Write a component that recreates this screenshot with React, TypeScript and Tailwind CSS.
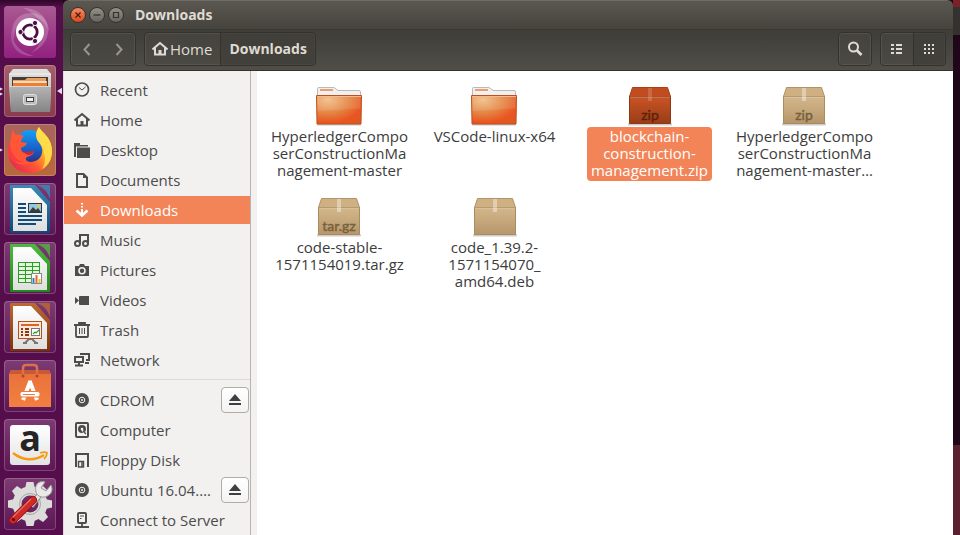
import React from "react";

const FONT = "font-['Open_Sans','Noto_Sans',sans-serif]";

/* ---------- launcher artwork ---------- */

function DashArt() {
  return (
    <svg viewBox="0 0 52 52" className="size-full" aria-hidden="true">
      <defs>
        <linearGradient id="dash" x1="0" y1="0" x2="0" y2="1">
          <stop offset="0" stopColor="#a95a92" />
          <stop offset="1" stopColor="#92207f" />
        </linearGradient>
      </defs>
      <rect width="52" height="52" rx="4" fill="url(#dash)" />
      <path d="M10 34C4 18 14 7 27 7c11 0 18 8 18 19C41 15 34 10 25 12c-9 1-15 9-15 22Z" fill="#fff" opacity=".2" />
      <path d="M19 2c15 0 25 9 25 23 0 9-6 17-17 22 10-8 15-18 11-27C35 12 28 6 19 2Z" fill="#fff" opacity=".2" />
      <path d="M8 22C7 38 16 46 30 50 14 51 4 40 8 22Z" fill="#fff" opacity=".18" />
      <circle cx="26" cy="26" r="14" fill="#fff" />
      <circle cx="26" cy="26" r="7.200" fill="none" stroke="#4c0f44" strokeWidth="2.800" />
      <path d="M26 26H16M26 26l5-9M26 26l5 9" stroke="#fff" strokeWidth="1.200" />
      <circle cx="26" cy="26" r="5" fill="#fff" />
      {[[16.5, 26], [31, 17], [31, 35]].map(([x, y]) => (
        <circle key={y} cx={x} cy={y} r="2.600" fill="#4c0f44" stroke="#fff" strokeWidth="0.900" />
      ))}
    </svg>
  );
}

function FilesArt() {
  return (
    <svg viewBox="0 0 52 52" className="size-full" aria-hidden="true">
      <defs>
        <linearGradient id="cabTop" x1="0" y1="0" x2="0" y2="1">
          <stop offset="0" stopColor="#e2e2e2" />
          <stop offset="1" stopColor="#a8a8a8" />
        </linearGradient>
        <linearGradient id="cab" x1="0" y1="0" x2="0" y2="1">
          <stop offset="0" stopColor="#b4b4b4" />
          <stop offset="1" stopColor="#858585" />
        </linearGradient>
      </defs>
      <path d="M9 4h34l4 5v12l-1 26H7L5 21V9Z" fill="url(#cabTop)" />
      <path d="M5 9h42" stroke="#f3f3f3" />
      <rect x="8" y="12" width="36" height="11" fill="#4a3c34" />
      <path d="M9 15h12l2-2h19v10H9Z" fill="#e8a15c" />
      <path d="M9 17h34" stroke="#fff1df" strokeWidth="1.400" />
      <path d="M9 19.500h34" stroke="#ef7d34" strokeWidth="3" />
      <path d="M6 21h41l-1 26H7Z" fill="url(#cab)" />
      <path d="M6 21.500h41" stroke="#d8d8d8" />
      <rect x="19.500" y="29.500" width="13" height="10" rx="2" fill="#bdbdbd" stroke="#e0e0e0" />
      <rect x="22.500" y="32.500" width="7" height="4" fill="#efefef" stroke="#444" />
    </svg>
  );
}

function FirefoxArt() {
  return (
    <svg viewBox="0 0 52 52" className="size-full" aria-hidden="true">
      <defs>
        <linearGradient id="ffBody" x1="1" y1="0.100" x2="0.150" y2="0.900">
          <stop offset="0" stopColor="#ffe34a" />
          <stop offset=".4" stopColor="#ffb02a" />
          <stop offset=".66" stopColor="#ff5a30" />
          <stop offset="1" stopColor="#ea2a50" />
        </linearGradient>
        <linearGradient id="ffGlobe" x1="0" y1="0" x2="0" y2="1">
          <stop offset="0" stopColor="#12a0f4" />
          <stop offset=".6" stopColor="#1a5fc8" />
          <stop offset="1" stopColor="#27328c" />
        </linearGradient>
      </defs>
      <circle cx="26" cy="22" r="16" fill="url(#ffGlobe)" />
      <path d="M35 3c2 5 13 10 13 24 0 13-9 22-22 22S4 40 4 27c0-4 1-8 2-11l10 14c2 5 6 8 11 8 6 0 10-4 11-9 1-5-1-8-4-12-3-5-2-10 1-14Z" fill="url(#ffBody)" />
      <path d="M35 3c2 5 13 10 13 24 0 8-4 15-10 18 3-5 4-10 2-15 0-5-2-8-6-13-3-5-2-10 1-14Z" fill="#ffe24c" opacity=".8" />
      <path d="M10 4c-1 3 0 5 2 7 3-1 6 0 8 1-2 2-3 4-3 6l6 1c0 2-4 4-6 5 0 3 2 5 5 5s5-2 8-1c-1 3-4 4-7 5-3 2 0 5 5 6-8 4-19 1-24-9 0-6 1-11 3-14 0-5 1-9 3-12Z" fill="#ff5636" />
      <path d="M6 16c-1 10 4 20 14 22-8 1-14-2-16-9 0-5 1-10 2-13Z" fill="#f8304a" opacity=".7" />
      <path d="M19 27c4 2 8-1 11 1-2 3-7 5-11-1Z" fill="#c8283a" />
    </svg>
  );
}

function OfficeSheet({ edge, dark, id, children }: { edge: string; dark: string; id: string; children: React.ReactNode }) {
  return (
    <svg viewBox="0 0 52 52" className="size-full" aria-hidden="true">
      <defs>
        <linearGradient id={id} x1="0" y1="0" x2="0" y2="1">
          <stop offset="0" stopColor={edge} />
          <stop offset="1" stopColor={dark} />
        </linearGradient>
        <linearGradient id={id + "Paper"} x1="0" y1="0" x2="0" y2="1">
          <stop offset="0" stopColor="#fff" />
          <stop offset="1" stopColor="#dedede" />
        </linearGradient>
      </defs>
      <path d="M7 2h24l15 17v30q0 1-1 1H7q-1 0-1-1V3q0-1 1-1Z" fill={"url(#" + id + ")"} />
      <path d="M33 2h12q1 0 1 1v13C43 8 40 5 33 2Z" fill={edge} opacity=".8" />
      <path d="M9 5h18l16 17v26H9Z" fill={"url(#" + id + "Paper)"} />
      {children}
    </svg>
  );
}

function WriterArt() {
  return (
    <OfficeSheet id="writer" edge="#3b8ab8" dark="#0d4a78">
      <path d="M14 21h8M14 25h8M14 29h8M14 33h24M14 37h24M14 41h18" stroke="#0f4c7c" strokeWidth="2" />
      <rect x="24.500" y="20.500" width="13" height="9" fill="#8ecae8" stroke="#333" />
      <path d="m25 29 4-5 3 3 2-2 3 4Z" fill="#3b3b38" />
      <circle cx="34.500" cy="22.500" r="1.500" fill="#f4c63a" />
    </OfficeSheet>
  );
}

function CalcArt() {
  return (
    <OfficeSheet id="calc" edge="#4fb83f" dark="#1f8a17">
      <rect x="14" y="20" width="22" height="21" fill="#2e9c25" />
      {[21, 25, 29, 33, 37].map((y) => (
        <path key={y} d={`M15 ${y + 1.5}h6m1 0h6m1 0h6`} stroke="#e3f7dc" strokeWidth="2.800" />
      ))}
      <rect x="27.500" y="31.500" width="10" height="10" fill="#fff" stroke="#888" />
      <path d="M29.500 41v-5" stroke="#2684c6" strokeWidth="2" />
      <path d="M32.500 41v-8" stroke="#e86a1c" strokeWidth="2" />
      <path d="M35.500 41v-4" stroke="#f1be1c" strokeWidth="2" />
    </OfficeSheet>
  );
}

function ImpressArt() {
  return (
    <OfficeSheet id="impress" edge="#bd6a34" dark="#7c3304">
      <path d="m21 42 4-4h3l4 4M19 42h4M30 42h4" stroke="#777" strokeWidth="2" fill="none" />
      <rect x="14.500" y="20.500" width="23" height="17" fill="#fde9dc" stroke="#b4501a" />
      <path d="M17 24h18" stroke="#d9642a" strokeWidth="2" />
      <path d="M17 28h2M17 31h2M17 34h2M21 28h4M21 31h4M21 34h4" stroke="#8a3a10" strokeWidth="1.800" />
      <rect x="27.500" y="27.500" width="8" height="7" fill="#fff" stroke="#777" />
      <path d="m29 33 2-2 1 1 3-3" stroke="#2fa02a" strokeWidth="1.200" fill="none" />
    </OfficeSheet>
  );
}

function SoftwareArt() {
  return (
    <svg viewBox="0 0 52 52" className="size-full" aria-hidden="true">
      <defs>
        <linearGradient id="bag" x1="0" y1="0" x2="0" y2="1">
          <stop offset="0" stopColor="#e8703a" />
          <stop offset="1" stopColor="#f28040" />
        </linearGradient>
      </defs>
      <path d="M7 10h38l2 4v33H5V14Z" fill="url(#bag)" />
      <path d="M7 10h38l2 4H5Z" fill="#c65a35" />
      <path d="M19 17V8q0-3 3-3h8q3 0 3 3v9" fill="none" stroke="#dd7049" strokeWidth="2.500" />
      <circle cx="19" cy="16" r="1.500" fill="#b8441c" />
      <circle cx="33" cy="16" r="1.500" fill="#b8441c" />
      <path d="m26 22-7 18M26 22l7 18" stroke="#fff" strokeWidth="4" />
      <path d="M24 22h4" stroke="#fff" strokeWidth="3" />
      <rect x="16" y="31.500" width="20" height="5.500" rx="2" fill="#fff" stroke="#ee7a3d" />
      <path d="M19 34.500h12" stroke="#ee7a3d" />
    </svg>
  );
}

function AmazonArt() {
  return (
    <svg viewBox="0 0 52 52" className="size-full overflow-visible" aria-hidden="true">
      <defs>
        <linearGradient id="amz" x1="0" y1="0" x2="0" y2="1">
          <stop offset="0" stopColor="#fff" />
          <stop offset="1" stopColor="#e3e3e3" />
        </linearGradient>
      </defs>
      <rect x="6" y="6" width="40" height="40" rx="3" fill="url(#amz)" />
      <text x="26" y="32" textAnchor="middle" fontFamily="Open Sans" fontWeight="700" fontSize="36" fill="#252525">a</text>
      <path d="M9 34c10 8 22 8 31 2" fill="none" stroke="#f79a12" strokeWidth="2.400" />
      <path d="M36 34c3-1 6-1 7 0 0 2-1 4-3 6" fill="none" stroke="#f79a12" strokeWidth="1.800" />
    </svg>
  );
}

function SettingsArt() {
  return (
    <svg viewBox="0 0 52 52" className="size-full" aria-hidden="true">
      <g fill="#dcdcda">
        {[0, 45, 90, 135, 180, 225, 270, 315].map((a) => (
          <path key={a} d="M20.500 13l2-9h7l2 9Z" transform={`rotate(${a} 26 26)`} />
        ))}
      </g>
      <circle cx="26" cy="26" r="13" fill="none" stroke="#dcdcda" strokeWidth="9" />
      <circle cx="26" cy="26" r="10.500" fill="none" stroke="#a9a5a7" />
      <path d="M27 28 37 15" stroke="#8f8f8f" strokeWidth="6" />
      <path d="M27 28 37 15" stroke="#e6e6e6" strokeWidth="4" />
      <path d="M41 4c-6-2-11 3-9 10 1 5 8 7 13 3 3-2 4-6 2-10l-5 6-5-3Z" fill="#e9e9e7" stroke="#9b9b9b" />
      <path d="M9 42 29 22" stroke="#8e1010" strokeWidth="8" strokeLinecap="round" />
      <path d="M9 42 29 22" stroke="#cf2a27" strokeWidth="6.500" strokeLinecap="round" />
      <path d="M9 39 27 21" stroke="#e8706a" strokeWidth="1.200" />
      <circle cx="9.500" cy="41.500" r="1.600" fill="#5b0808" />
    </svg>
  );
}

const launcher = [
  { name: "Search your computer", art: <DashArt />, tile: "bg-[#93307f]" },
  { name: "Files", art: <FilesArt />, tile: "bg-[linear-gradient(#a5606a,#8a3a4c)]", left: 2, focused: true },
  { name: "Firefox Web Browser", art: <FirefoxArt />, tile: "bg-[linear-gradient(#a8655c,#b8683c)]", left: 1 },
  { name: "LibreOffice Writer", art: <WriterArt />, tile: "bg-[linear-gradient(#7d3b73,#5c1655)]" },
  { name: "LibreOffice Calc", art: <CalcArt />, tile: "bg-[linear-gradient(#7d3b73,#5c1655)]" },
  { name: "LibreOffice Impress", art: <ImpressArt />, tile: "bg-[linear-gradient(#7d3b73,#5c1655)]" },
  { name: "Ubuntu Software", art: <SoftwareArt />, tile: "bg-[linear-gradient(#7d3b73,#5c1655)]" },
  { name: "Amazon", art: <AmazonArt />, tile: "bg-[linear-gradient(#7d3b73,#5c1655)]" },
  { name: "System Settings", art: <SettingsArt />, tile: "bg-[linear-gradient(#7d3b73,#5c1655)]" },
];

function Launcher() {
  return (
    <nav aria-label="Launcher" className="w-[63px] shrink-0 overflow-hidden bg-[linear-gradient(#2c0728,#560d4c_7px,#560d4c)]">
      <ul className="flex flex-col gap-[7px] pt-1.5">
        {launcher.map((app) => (
          <li key={app.name} className="flex items-center">
            <span className="flex w-1 flex-col gap-px">
              {Array.from({ length: app.left ?? 0 }, (_, i) => (
                <svg key={i} viewBox="0 0 4 4" className="h-1 w-[3px]" aria-hidden="true"><path d="M0 0l4 2-4 2Z" fill="#e3dce2" /></svg>
              ))}
            </span>
            <button type="button" aria-label={app.name} className={`size-[52px] rounded ${app.tile} shadow-[inset_0_0_0_1px_rgba(255,255,255,0.2)]`}>
              {app.art}
            </button>
            {app.focused && (
              <svg viewBox="0 0 6 8" className="ml-px h-2 w-[5px]" aria-hidden="true"><path d="M6 0v8L0 4Z" fill="#e3dce2" /></svg>
            )}
          </li>
        ))}
      </ul>
    </nav>
  );
}

/* ---------- symbolic icons, 16px grid ---------- */

function Sym({ children }: { children: React.ReactNode }) {
  return (
    <svg viewBox="0 0 16 16" className="size-4 shrink-0" fill="none" stroke="currentColor" strokeWidth="2" aria-hidden="true">
      {children}
    </svg>
  );
}

const homeShape = (
  <>
    <path d="M.5 8.500 8 2l7.500 6.500" />
    <path d="M3 7v6.500h10V7" />
    <path d="M6.500 13.500V9h3v4.500Z" fill="currentColor" stroke="none" />
  </>
);
const discShape = (
  <>
    <circle cx="8" cy="8" r="7" fill="currentColor" stroke="none" />
    <circle cx="8" cy="8" r="2.800" stroke="#f2f1f0" strokeWidth="1" />
    <circle cx="8" cy="8" r="1" fill="#f2f1f0" stroke="none" />
  </>
);

const places = [
  { label: "Recent", icon: <><circle cx="8" cy="7.500" r="6.500" strokeWidth="1.700" /><path d="m5 5.500 3 2.500 3.500-3" strokeWidth="1" /></> },
  { label: "Home", icon: homeShape },
  { label: "Desktop", icon: <><path d="M0 1h6v2h8v1.500H2V15H0Z" fill="currentColor" stroke="none" /><path d="M3 5.500h13V16H3Z" fill="currentColor" stroke="none" /></> },
  { label: "Documents", icon: <><path d="M3 2h6.500L13 5.500V15H3Z" /><path d="M9 2v4h4Z" fill="currentColor" stroke="none" /></> },
  { label: "Downloads", icon: <><path d="M8 1v1.500M8 4v1.500M8 7v6" /><path d="m2.500 8.500 5.500 5 5.500-5" strokeWidth="2.600" /></>, active: true },
  { label: "Music", icon: <><circle cx="3.500" cy="11.500" r="2.500" /><circle cx="11.500" cy="11.500" r="2.500" /><path d="M6 11.500V3h8v8.500" /></> },
  { label: "Pictures", icon: <><path d="M1 4h4l1-2h4l1 2h4v10H1Z" fill="currentColor" stroke="none" /><circle cx="8" cy="8.800" r="3" stroke="#f2f1f0" strokeWidth="1.600" /></> },
  { label: "Videos", icon: <path d="M1 5l4 3.500L1 12ZM5 5q0-1 1-1h9v9H6q-1 0-1-1Z" fill="currentColor" stroke="none" /> },
  { label: "Trash", icon: <><path d="M0 3h16M5 2V1h6v1M2 3v11q0 1 1 1h10q1 0 1-1V3" strokeWidth="1.800" /><path d="M5.500 6v6M8 6v6M10.500 6v6" strokeWidth="1" /></> },
  { label: "Network", icon: <><path d="M1 5h8v5H1Z" /><path d="M1 13.500h8M5 10v3M7 3V2h8v6h-3M11 11h4" strokeWidth="2" /></> },
];

const devices = [
  { label: "CDROM", icon: discShape, eject: true },
  { label: "Computer", icon: <><rect x="2" y="1" width="12" height="14" rx="1" /><circle cx="8" cy="7" r="4" fill="currentColor" stroke="none" /><circle cx="8" cy="7" r="1.300" fill="#f2f1f0" stroke="none" /><path d="m8 8 4 5" stroke="#f2f1f0" strokeWidth="1.500" /><path d="m9 9 3 3" strokeWidth="1.300" /></> },
  { label: "Floppy Disk", icon: <><path d="M3 14H2V2h12v12h-1" /><path d="M4.500 15V9.500h5V15ZM9.500 9v6" strokeWidth="1.400" /><path d="M8 9v6" strokeWidth="1.500" /></> },
  { label: "Ubuntu 16.04.…", icon: discShape, eject: true },
  { label: "Connect to Server", icon: <><rect x="4" y="1" width="8" height="10" rx="1" /><path d="M6 4h4M6 6.500h1.500" strokeWidth="1" /><path d="M8 11v4M1 15h14" strokeWidth="1.800" /></> },
];

type Place = { label: string; icon: React.ReactNode; active?: boolean; eject?: boolean };

function PlaceRow({ place }: { place: Place }) {
  return (
    <li className={`flex h-7 items-center ${place.active ? "bg-[#f28458] text-white" : "text-[#4c4c4c]"}`}>
      <a href="#" aria-current={place.active ? "page" : undefined} className="flex min-w-0 flex-1 items-center gap-2.5 pl-2.5">
        <Sym>{place.icon}</Sym>
        <span className="whitespace-nowrap">{place.label}</span>
      </a>
      {place.eject && (
        <button type="button" aria-label={`Eject ${place.label}`} className="mr-px flex h-[26px] w-7 items-center justify-center rounded border border-[#b0aca8] bg-[linear-gradient(#fff,#f4f3f2)]">
          <svg viewBox="0 0 12 12" className="size-3" aria-hidden="true"><path d="M6 0l6 7H0ZM0 9h12v2H0Z" fill="#3f3f3f" /></svg>
        </button>
      )}
    </li>
  );
}

function Sidebar() {
  return (
    <nav aria-label="Places" className="w-[188px] shrink-0 overflow-hidden border-r border-l border-[#b6b3b0] border-l-[#dedcda] bg-[#f2f1f0] pt-[5px]">
      <ul className="flex flex-col gap-0.5">{places.map((p) => <PlaceRow key={p.label} place={p} />)}</ul>
      <hr className="mt-[5px] mb-1.5 border-[#dbd9d7]" />
      <ul className="flex flex-col gap-0.5">{devices.map((p) => <PlaceRow key={p.label} place={p} />)}</ul>
    </nav>
  );
}

/* ---------- files ---------- */

function FolderIcon() {
  return (
    <svg viewBox="0 0 46 39" className="h-[39px] w-[46px]" aria-hidden="true">
      <defs>
        <radialGradient id="folder" cx=".25" cy=".15" r="1">
          <stop offset="0" stopColor="#f2bd84" />
          <stop offset=".45" stopColor="#e48745" />
          <stop offset=".8" stopColor="#ea5520" />
          <stop offset="1" stopColor="#dc5a22" />
        </radialGradient>
      </defs>
      <path d="M1.500 9V1.500q0-1 1-1H17q2 0 3 1.500l2 1.500h21q1.500 0 1.500 1.500v4Z" fill="#f0f0f0" stroke="#b9b9b9" />
      <path d="M4 3h13" stroke="#ee9c6c" strokeWidth="2" />
      <rect x="1" y="37" width="44" height="1.500" rx=".7" fill="#000" opacity=".22" />
      <path d="M.5 8.500h45l-.5 28.500H1Z" fill="url(#folder)" stroke="#bf4f1e" />
      <path d="M1.500 9.500h43v12L1.500 24Z" fill="#fff" opacity=".1" />
      <path d="M1 9.500h44" stroke="#f6b98e" />
    </svg>
  );
}

function PackageIcon({ tag, selected }: { tag?: string; selected?: boolean }) {
  const id = selected ? "boxSel" : "box";
  return (
    <svg viewBox="0 0 46 39" className="h-[39px] w-[46px] overflow-visible" aria-hidden="true">
      <defs>
        <linearGradient id={id} x1="0" y1="0" x2="0" y2="1">
          <stop offset="0" stopColor={selected ? "#cb5425" : "#d3b88c"} />
          <stop offset="1" stopColor={selected ? "#983d18" : "#b6966a"} />
        </linearGradient>
      </defs>
      <rect x="1" y="36" width="44" height="2.500" rx="1" fill="#000" opacity=".2" />
      <path d="M5.500.5h35l3 9h-41Z" fill={selected ? "#c14c20" : "#cfb083"} stroke={selected ? "#a84018" : "#b39263"} />
      <path d="M2.500 9.500h41v27h-41Z" fill={`url(#${id})`} stroke={selected ? "#8f3813" : "#ab8a5d"} />
      <path d="M3 10h40" stroke="#fff" opacity=".28" />
      <path d="M21 1h4v13h-4Z" fill="#fff" opacity={selected ? ".16" : ".38"} />
      {tag && (
        <text x="23" y="33" textAnchor="middle" fontFamily="Lato" fontWeight="400" fontSize="14" fill={selected ? "#5e2109" : "#75603d"} stroke={selected ? "#5e2109" : "#75603d"} strokeWidth="0.400">{tag}</text>
      )}
    </svg>
  );
}

const files = [
  { name: "HyperledgerCompo\nserConstructionMa\nnagement-master", icon: <FolderIcon /> },
  { name: "VSCode-linux-x64", icon: <FolderIcon /> },
  { name: "blockchain-\nconstruction-\nmanagement.zip", icon: <PackageIcon tag="zip" selected />, selected: true },
  { name: "HyperledgerCompo\nserConstructionMa\nnagement-master…", icon: <PackageIcon tag="zip" /> },
  { name: "code-stable-\n1571154019.tar.gz", icon: <PackageIcon tag="tar.gz" /> },
  { name: "code_1.39.2-\n1571154070_\namd64.deb", icon: <PackageIcon /> },
];

function FileGrid() {
  return (
    <main className="min-w-0 flex-1 overflow-hidden bg-white pt-4 pl-[5px]">
      <ul className="grid grid-cols-[repeat(auto-fill,155px)] gap-y-4">
        {files.map((f) => (
          <li key={f.name} className="flex min-h-[95px] justify-center">
            <button type="button" aria-pressed={!!f.selected} className="flex flex-col items-center self-start text-center leading-[17px]">
              {f.icon}
              <span className={`mt-px rounded px-1 pt-px pb-0.5 whitespace-pre ${f.selected ? "bg-[#f28458] text-white" : "text-[#3c3c3c]"}`}>
                {f.name}
              </span>
            </button>
          </li>
        ))}
      </ul>
    </main>
  );
}

/* ---------- window chrome ---------- */

const group = "flex h-[34px] overflow-hidden rounded border border-[#33322e] bg-[linear-gradient(#45433d,#4b4943)] shadow-[inset_0_0_0_1px_rgba(255,255,255,0.07)]";
const pressed = "bg-[#3e3c37]/60";

function TitleBar() {
  return (
    <header className="flex h-[29px] shrink-0 items-center gap-[3px] rounded-t-md border-t border-[#6d6a62] bg-[linear-gradient(#5a5850,#45433d)] pl-[7px]">
      <button type="button" aria-label="Close" className="size-4 rounded-full border border-[#33322e] bg-[linear-gradient(#f58a64,#dd4a1c)]">
        <svg viewBox="0 0 14 14" aria-hidden="true"><path d="m4.500 4.500 5 5m0-5-5 5" stroke="#4a1d0c" strokeWidth="1.300" /></svg>
      </button>
      <button type="button" aria-label="Minimize" className="size-4 rounded-full border border-[#33322e] bg-[linear-gradient(#92908a,#66645d)]">
        <svg viewBox="0 0 14 14" aria-hidden="true"><path d="M3.500 7h7" stroke="#34332f" strokeWidth="1.300" /></svg>
      </button>
      <button type="button" aria-label="Maximize" className="size-4 rounded-full border border-[#33322e] bg-[linear-gradient(#92908a,#66645d)]">
        <svg viewBox="0 0 14 14" aria-hidden="true"><path d="M4.500 4.500h5v5h-5Z" fill="none" stroke="#34332f" strokeWidth="1.200" /></svg>
      </button>
      <h1 className="ml-2 text-[14px] font-bold text-[#dfdbd2]">Downloads</h1>
    </header>
  );
}

function Toolbar() {
  return (
    <div className="flex h-[42px] shrink-0 items-start gap-2 border-t border-b border-[#393833] border-b-[#33322e] bg-[linear-gradient(#3e3d38,#504e47)] px-[7px] pt-0.5 text-[#dfdbd2]">
      <div className={`${group} w-[66px] text-[#98958d]`}>
        <button type="button" aria-label="Back" className="flex flex-1 items-center justify-center"><Sym><path d="m10.500 3-5 5.500 5 5.500" /></Sym></button>
        <button type="button" aria-label="Forward" className="flex flex-1 items-center justify-center"><Sym><path d="m5.500 3 5 5.500-5 5.500" /></Sym></button>
      </div>
      <nav aria-label="Path" className={group}>
        <button type="button" className="flex items-center gap-0.5 border-r border-[#33322e] pr-2 pl-[7px]"><Sym>{homeShape}</Sym>Home</button>
        <button type="button" className={`px-2 text-[14px] font-bold ${pressed}`}>Downloads</button>
      </nav>
      <div className={`${group} ml-auto w-[34px]`}>
        <button type="button" aria-label="Search" className="flex flex-1 items-center justify-center"><Sym><circle cx="6.500" cy="6" r="4.500" /><path d="m10 9.500 4.500 4.500" strokeWidth="2.600" /></Sym></button>
      </div>
      <div className={`${group} w-[66px]`}>
        <button type="button" aria-label="List view" className="flex flex-1 items-center justify-center">
          <Sym><path d="M2 4h3m2 0h6M2 8h3m2 0h6M2 12h3m2 0h6" /></Sym>
        </button>
        <button type="button" aria-label="Icon view" className={`flex flex-1 items-center justify-center border-l border-[#33322e] ${pressed}`}>
          <Sym><path d="M3 4h2m2 0h2m2 0h2M3 8h2m2 0h2m2 0h2M3 12h2m2 0h2m2 0h2" /></Sym>
        </button>
      </div>
    </div>
  );
}

export default function App() {
  return (
    <div className={`flex h-screen overflow-hidden bg-[#1f0619] text-[15px] leading-5 ${FONT}`}>
      <Launcher />
      <section aria-label="Files" className="flex min-w-0 flex-1 flex-col">
        <TitleBar />
        <Toolbar />
        <div className="flex min-h-0 flex-1 bg-[#f2f1f0]">
          <Sidebar />
          <div className="w-1.5 shrink-0" />
          <FileGrid />
        </div>
      </section>
      <div className="flex w-[7px] shrink-0 flex-col" aria-hidden="true">
        <div className="h-[7px] bg-[#7a2029]" />
        <div className="h-7 bg-[#33322e]" />
        <div className="flex-1 bg-[#1f0619]" />
        <div className="h-[90px] bg-[#5b1f2f]" />
      </div>
    </div>
  );
}
